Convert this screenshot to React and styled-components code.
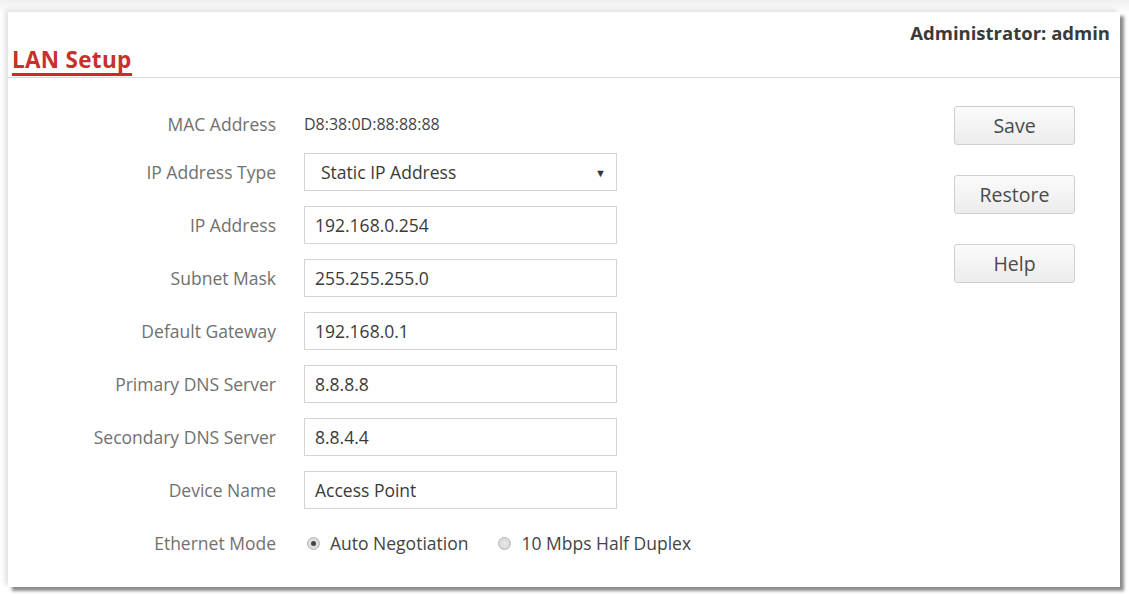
import React from "react";
import styled, { createGlobalStyle } from "styled-components";

const Global = createGlobalStyle`
  html, body { margin: 0; padding: 0; background: #ffffff; }
  body { font-family: "Open Sans", "Noto Sans", sans-serif; width: 1129px; height: 595px; overflow: hidden; }
`;

const Page = styled.div`
  width: 1129px;
  height: 595px;
  padding: 12px 9px 8px 8px;
  box-sizing: border-box;
  background: linear-gradient(#f0f0f0, #ffffff 14px);
`;

const Panel = styled.div`
  height: 575px;
  background: #fff;
  box-shadow: 4px 4px 3px rgba(0, 0, 0, 0.45), -3px -2px 5px rgba(0, 0, 0, 0.12);
  display: flex;
  flex-direction: column;
`;

const Header = styled.div`
  height: 66px;
  border-bottom: 1px solid #dcdcdc;
  display: flex;
  justify-content: space-between;
  align-items: flex-start;
  padding: 0 10px 0 4px;
  box-sizing: border-box;
`;

const Title = styled.div`
  align-self: flex-end;
  font-size: 22.5px;
  font-weight: 700;
  color: #c9302c;
  line-height: 26px;
  padding-bottom: 0;
  border-bottom: 3px solid #d0282c;
  margin-bottom: 1px;
  letter-spacing: 0.3px;
`;

const Admin = styled.div`
  margin-top: 8px;
  font-size: 18.5px;
  font-weight: 700;
  color: #3a3a3a;
`;

const Body = styled.div`
  display: flex;
  flex: 1;
`;

const Form = styled.div`
  display: grid;
  grid-template-columns: 268px 313px;
  column-gap: 28px;
  row-gap: 15px;
  padding-top: 32px;
  align-content: start;
`;

const Label = styled.div`
  text-align: right;
  font-size: 17.5px;
  color: #707070;
  height: ${(p) => (p.$short ? 28 : 38)}px;
  line-height: ${(p) => (p.$short ? 28 : 38)}px;
  white-space: nowrap;
`;

const Value = styled.div`
  font-size: 16px;
  color: #444;
  line-height: 28px;
  height: 28px;
`;

const Field = styled.div`
  height: 38px;
  border: 1px solid #d4d4d4;
  box-sizing: border-box;
  font-size: 17.5px;
  color: #3a3a3a;
  padding: 0 10px 0 ${(p) => (p.$select ? 16 : 10)}px;
  display: flex;
  align-items: center;
  justify-content: space-between;
  white-space: nowrap;
`;

const Arrow = styled.span`
  font-size: 11px;
  color: #333;
`;

const Radios = styled.div`
  display: flex;
  align-items: center;
  gap: 30px;
  height: 38px;
  padding-left: 3px;
  width: 460px;
`;

const RadioItem = styled.label`
  display: flex;
  align-items: center;
  gap: 10px;
  font-size: 17.5px;
  color: #444;
  white-space: nowrap;
`;

const Dot = styled.span`
  width: 13px;
  height: 13px;
  border-radius: 50%;
  border: 1px solid #b5b5b5;
  background: radial-gradient(circle, #e8e8e8, #d2d2d2);
  box-sizing: border-box;
  display: flex;
  align-items: center;
  justify-content: center;
  &::after {
    content: "";
    width: 5px;
    height: 5px;
    border-radius: 50%;
    background: ${(p) => (p.$on ? "#444" : "transparent")};
  }
`;

const Buttons = styled.div`
  margin-left: auto;
  margin-right: 45px;
  padding-top: 28px;
  display: flex;
  flex-direction: column;
  gap: 30px;
`;

const Button = styled.button`
  width: 121px;
  height: 39px;
  border: 1px solid #cfcfcf;
  border-radius: 3px;
  background: linear-gradient(#fbfbfb, #ececec);
  font-family: "Open Sans", "Noto Sans", sans-serif;
  font-size: 19.5px;
  color: #4a4a4a;
  padding: 0;
`;

const fields = [
  ["IP Address", "192.168.0.254"],
  ["Subnet Mask", "255.255.255.0"],
  ["Default Gateway", "192.168.0.1"],
  ["Primary DNS Server", "8.8.8.8"],
  ["Secondary DNS Server", "8.8.4.4"],
  ["Device Name", "Access Point"],
];

export default function App() {
  return (
    <>
      <Global />
      <Page>
        <Panel>
          <Header>
            <Title>LAN Setup</Title>
            <Admin>Administrator: admin</Admin>
          </Header>
          <Body>
            <Form>
              <Label $short>MAC Address</Label>
              <Value>D8:38:0D:88:88:88</Value>
              <Label>IP Address Type</Label>
              <Field $select>
                <span>Static IP Address</span>
                <Arrow>▼</Arrow>
              </Field>
              {fields.map(([l, v]) => (
                <React.Fragment key={l}>
                  <Label>{l}</Label>
                  <Field>{v}</Field>
                </React.Fragment>
              ))}
              <Label>Ethernet Mode</Label>
              <Radios>
                <RadioItem>
                  <Dot $on />
                  Auto Negotiation
                </RadioItem>
                <RadioItem>
                  <Dot />
                  10 Mbps Half Duplex
                </RadioItem>
              </Radios>
            </Form>
            <Buttons>
              <Button>Save</Button>
              <Button>Restore</Button>
              <Button>Help</Button>
            </Buttons>
          </Body>
        </Panel>
      </Page>
    </>
  );
}
